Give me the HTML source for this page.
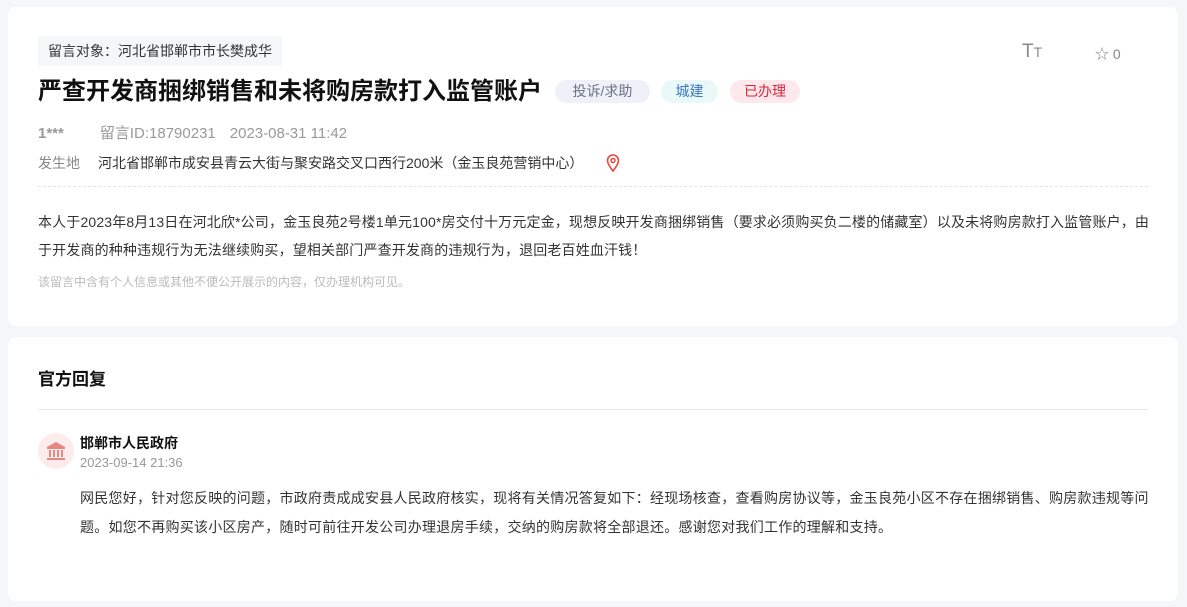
<!DOCTYPE html>
<html><head><meta charset="utf-8"><style>
*{margin:0;padding:0;box-sizing:border-box}
body{width:1187px;height:607px;background:#f5f6f8;font-family:"Liberation Sans","Noto Sans CJK SC",sans-serif;position:relative;overflow:hidden;color:#333}
.card{position:absolute;left:8px;width:1170px;background:#fff;border-radius:8px}
.a{position:absolute;white-space:nowrap}
.tag{position:absolute;top:73px;height:23px;line-height:23px;border-radius:12px;font-size:14px;text-align:center}
</style></head><body>
<div class="card" style="top:7px;height:319px">
<div class="a" style="left:30px;top:29px;width:244px;height:30px;background:#f5f6f8;border-radius:2px;font-size:14px;line-height:30px;padding-left:10px;color:#333">留言对象：河北省邯郸市市长樊成华</div>
<div class="a" style="left:30px;top:68px;font-size:24px;font-weight:bold;color:#111;line-height:34px">严查开发商捆绑销售和未将购房款打入监管账户</div>
<div class="tag" style="left:547px;width:95px;background:#eef1f7;color:#6a7289">投诉/求助</div>
<div class="tag" style="left:653px;width:57px;background:#eaf8f8;color:#3a78c8">城建</div>
<div class="tag" style="left:722px;width:70px;background:#fde8ec;color:#d7263d">已办理</div>
<div class="a" style="left:1014px;top:34px;font-size:19px;color:#888">T<span style="font-size:14px">T</span></div>
<div class="a" style="left:1087px;top:37px;font-size:14px;color:#888">☆ 0</div>
<div class="a" style="left:30px;top:115px;font-size:15px;color:#999"><b>1***</b><span style="margin-left:36px">留言ID:18790231</span><span style="margin-left:14px">2023-08-31 11:42</span></div>
<div class="a" style="left:30px;top:146px;font-size:14px;color:#888">发生地<span style="margin-left:18px;color:#333">河北省邯郸市成安县青云大街与聚安路交叉口西行200米（金玉良苑营销中心）</span></div>
<svg class="a" style="left:598px;top:147px" width="14" height="18" viewBox="0 0 14 18"><path d="M7 17C3 12 1.5 9 1.5 6.5a5.5 5.5 0 0 1 11 0C12.5 9 11 12 7 17z" fill="none" stroke="#e8473a" stroke-width="1.6"/><circle cx="7" cy="6.5" r="2" fill="none" stroke="#e8473a" stroke-width="1.5"/></svg>
<div class="a" style="left:30px;top:179px;width:1110px;border-top:1px dashed #e3e3e3"></div>
<div class="a" style="left:30px;top:201px;width:1112px;white-space:normal;font-size:14px;line-height:28px;color:#333;letter-spacing:0.15px">本人于2023年8月13日在河北欣*公司，金玉良苑2号楼1单元100*房交付十万元定金，现想反映开发商捆绑销售（要求必须购买负二楼的储藏室）以及未将购房款打入监管账户，由于开发商的种种违规行为无法继续购买，望相关部门严查开发商的违规行为，退回老百姓血汗钱！</div>
<div class="a" style="left:30px;top:266px;font-size:12px;color:#bbb">该留言中含有个人信息或其他不便公开展示的内容，仅办理机构可见。</div>
</div>
<div class="card" style="top:337px;height:264px">
<div class="a" style="left:30px;top:28px;font-size:17px;font-weight:bold;color:#111">官方回复</div>
<div class="a" style="left:30px;top:72px;width:1110px;border-top:1px solid #e6e6e6"></div>
<div class="a" style="left:30px;top:96px;width:36px;height:36px;border-radius:50%;background:#fdeceb"></div>
<svg class="a" style="left:38px;top:104px" width="20" height="20" viewBox="0 0 20 20" fill="#e8877f"><path d="M10 1L1 6v2h18V6z"/><rect x="3" y="9" width="2" height="7"/><rect x="7" y="9" width="2" height="7"/><rect x="11" y="9" width="2" height="7"/><rect x="15" y="9" width="2" height="7"/><rect x="1" y="17" width="18" height="2"/></svg>
<div class="a" style="left:72px;top:96px;font-size:14px;font-weight:bold;color:#111">邯郸市人民政府</div>
<div class="a" style="left:72px;top:118px;font-size:13px;color:#999">2023-09-14 21:36</div>
<div class="a" style="left:72px;top:147px;width:1072px;white-space:normal;font-size:14px;line-height:29px;color:#333;letter-spacing:0.25px">网民您好，针对您反映的问题，市政府责成成安县人民政府核实，现将有关情况答复如下：经现场核查，查看购房协议等，金玉良苑小区不存在捆绑销售、购房款违规等问题。如您不再购买该小区房产，随时可前往开发公司办理退房手续，交纳的购房款将全部退还。感谢您对我们工作的理解和支持。</div>
</div>
</body></html>
